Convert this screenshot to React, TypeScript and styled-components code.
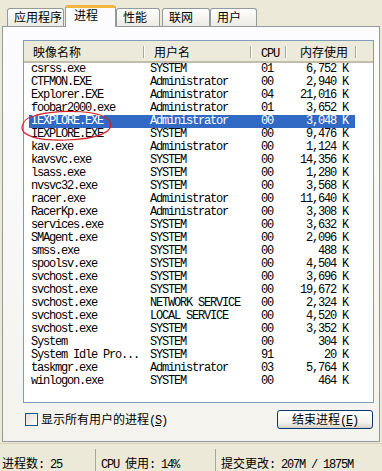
import styled, { createGlobalStyle } from "styled-components";

const cjk = `"Noto Sans CJK SC", sans-serif`;
const mono = `"Liberation Mono", "Noto Sans CJK SC", monospace`;

const GlobalStyle = createGlobalStyle`
  html, body {
    margin: 0;
    padding: 0;
    background: #ece9d8;
    overflow: hidden;
  }
  * { box-sizing: border-box; }
`;

type Proc = { name: string; user: string; cpu: string; mem: string };

const procs: Proc[] = [
  { name: "csrss.exe", user: "SYSTEM", cpu: "01", mem: "6,752 K" },
  { name: "CTFMON.EXE", user: "Administrator", cpu: "00", mem: "2,940 K" },
  { name: "Explorer.EXE", user: "Administrator", cpu: "04", mem: "21,016 K" },
  { name: "foobar2000.exe", user: "Administrator", cpu: "01", mem: "3,652 K" },
  { name: "IEXPLORE.EXE", user: "Administrator", cpu: "00", mem: "3,048 K" },
  { name: "IEXPLORE.EXE", user: "SYSTEM", cpu: "00", mem: "9,476 K" },
  { name: "kav.exe", user: "Administrator", cpu: "00", mem: "1,124 K" },
  { name: "kavsvc.exe", user: "SYSTEM", cpu: "00", mem: "14,356 K" },
  { name: "lsass.exe", user: "SYSTEM", cpu: "00", mem: "1,280 K" },
  { name: "nvsvc32.exe", user: "SYSTEM", cpu: "00", mem: "3,568 K" },
  { name: "racer.exe", user: "Administrator", cpu: "00", mem: "11,640 K" },
  { name: "RacerKp.exe", user: "Administrator", cpu: "00", mem: "3,308 K" },
  { name: "services.exe", user: "SYSTEM", cpu: "00", mem: "3,632 K" },
  { name: "SMAgent.exe", user: "SYSTEM", cpu: "00", mem: "2,096 K" },
  { name: "smss.exe", user: "SYSTEM", cpu: "00", mem: "488 K" },
  { name: "spoolsv.exe", user: "SYSTEM", cpu: "00", mem: "4,504 K" },
  { name: "svchost.exe", user: "SYSTEM", cpu: "00", mem: "3,696 K" },
  { name: "svchost.exe", user: "SYSTEM", cpu: "00", mem: "19,672 K" },
  { name: "svchost.exe", user: "NETWORK SERVICE", cpu: "00", mem: "2,324 K" },
  { name: "svchost.exe", user: "LOCAL SERVICE", cpu: "00", mem: "4,520 K" },
  { name: "svchost.exe", user: "SYSTEM", cpu: "00", mem: "3,352 K" },
  { name: "System", user: "SYSTEM", cpu: "00", mem: "304 K" },
  { name: "System Idle Pro...", user: "SYSTEM", cpu: "91", mem: "20 K" },
  { name: "taskmgr.exe", user: "Administrator", cpu: "03", mem: "5,764 K" },
  { name: "winlogon.exe", user: "SYSTEM", cpu: "00", mem: "464 K" },
];

const tabs = [
  { label: "应用程序", w: 57, ml: 0 },
  { label: "进程", w: 51, ml: 1, active: true },
  { label: "性能", w: 44, ml: 0 },
  { label: "联网", w: 48, ml: 2 },
  { label: "用户", w: 47, ml: 0 },
];

const Window = styled.div`
  width: 382px;
  height: 471px;
  display: flex;
  flex-direction: column;
  background: #ece9d8;
  font-family: ${cjk};
  font-size: 12px;
  color: #000;
`;

const TabStrip = styled.div`
  height: 26px;
  display: flex;
  align-items: flex-end;
  padding-left: 7px;
`;

const Tab = styled.div<{ $w: number; $ml: number; $active?: boolean }>`
  position: relative;
  width: ${(p) => p.$w}px;
  margin-left: ${(p) => p.$ml}px;
  height: ${(p) => (p.$active ? 22 : 18)}px;
  margin-bottom: ${(p) => (p.$active ? -1 : 0)}px;
  z-index: ${(p) => (p.$active ? 2 : 0)};
  padding-left: ${(p) => (p.$active ? 8 : 6)}px;
  border: 1px solid #919b9c;
  border-bottom: none;
  border-top: ${(p) => (p.$active ? "3px solid #f5b53f" : "1px solid #919b9c")};
  border-radius: 3px 3px 0 0;
  background: ${(p) =>
    p.$active ? "#fcfcfe" : "linear-gradient(#ffffff, #f3f2ee 60%, #ebeae3)"};
  line-height: ${(p) => (p.$active ? 14 : 16)}px;
  white-space: nowrap;
`;

const Panel = styled.div`
  margin: 0 2px;
  height: 416px;
  border: 1px solid #919b9c;
  background: linear-gradient(#fcfcfe, #f4f3ee);
  padding: 13px 5px 12px 20px;
  display: flex;
  flex-direction: column;
`;

const ListView = styled.div`
  position: relative;
  width: 351px;
  height: 363px;
  border: 1px solid #7f9db9;
  background: #fff;
`;

const Header = styled.div`
  display: flex;
  height: 22px;
  background: #ebeadb;
  border-bottom: 2px solid;
  border-image: linear-gradient(#d6d2c2, #c1bdaa) 1;
`;

const HeadCell = styled.div<{ $w: number; $pl?: number; $right?: boolean }>`
  position: relative;
  width: ${(p) => p.$w}px;
  padding-left: ${(p) => p.$pl ?? 0}px;
  padding-right: ${(p) => (p.$right ? 8 : 0)}px;
  text-align: ${(p) => (p.$right ? "right" : "left")};
  line-height: 21px;
  white-space: nowrap;
  &::after {
    content: "";
    position: absolute;
    right: 0;
    top: 5px;
    height: 12px;
    width: 1px;
    background: #aca899;
    box-shadow: 1px 0 0 #fff;
  }
`;

const Latin = styled.span`
  font-family: ${mono};
  letter-spacing: -1.2px;
`;

const Rows = styled.div`
  display: flex;
  flex-direction: column;
`;

const Row = styled.div<{ $selected?: boolean }>`
  display: flex;
  width: 326px;
  margin-left: 5px;
  height: 13px;
  line-height: 13px;
  font-family: ${mono};
  letter-spacing: -1.2px;
  background: ${(p) => (p.$selected ? "#316ac5" : "transparent")};
  color: ${(p) => (p.$selected ? "#fff" : "#000")};
  white-space: nowrap;
`;

const Cell = styled.div<{ $w: number; $pl?: number; $right?: boolean }>`
  width: ${(p) => p.$w}px;
  padding-left: ${(p) => p.$pl ?? 0}px;
  padding-right: ${(p) => (p.$right ? 7 : 0)}px;
  text-align: ${(p) => (p.$right ? "right" : "left")};
  overflow: hidden;
`;

const Circle = styled.svg`
  position: absolute;
  left: -1px;
  top: -1px;
  overflow: visible;
  pointer-events: none;
`;

const BottomRow = styled.div`
  margin-top: 7px;
  height: 19px;
  display: flex;
  align-items: center;
  justify-content: space-between;
`;

const CheckLabel = styled.label`
  display: flex;
  align-items: center;
  gap: 3px;
  margin-left: 2px;
  white-space: nowrap;
  line-height: 14px;
`;

const CheckBox = styled.span`
  width: 13px;
  height: 13px;
  border: 1px solid #1c5180;
  background: linear-gradient(135deg, #dcdcd7, #ffffff);
`;

const Button = styled.button`
  width: 96px;
  height: 19px;
  margin-right: 1px;
  border: 1px solid #003c74;
  border-radius: 3px;
  background: linear-gradient(#ffffff, #f3f2ed 70%, #d6d0c5);
  font-family: ${cjk};
  font-size: 12px;
  line-height: 15px;
  color: #000;
  padding: 0;
`;

const StatusBar = styled.div`
  margin-top: 1px;
  height: 28px;
  display: flex;
  border-top: 1px solid #d8d2bd;
`;

const StatusCell = styled.div<{ $w?: number; $sep?: boolean }>`
  ${(p) => (p.$w ? `width: ${p.$w}px;` : "flex: 1;")}
  margin-top: 5px;
  padding: 7px 0 0 ${(p) => (p.$sep ? 5 : 2)}px;
  border-left: ${(p) => (p.$sep ? "1px solid #aca899" : "none")};
  line-height: 13px;
  white-space: nowrap;
`;

export default function App() {
  return (
    <Window>
      <GlobalStyle />
      <TabStrip>
        {tabs.map((t) => (
          <Tab key={t.label} $w={t.w} $ml={t.ml} $active={t.active}>
            {t.label}
          </Tab>
        ))}
      </TabStrip>
      <Panel>
        <ListView>
          <Header>
            <HeadCell $w={120} $pl={9}>映像名称</HeadCell>
            <HeadCell $w={107} $pl={10}>用户名</HeadCell>
            <HeadCell $w={35} $pl={10}>
              <Latin>CPU</Latin>
            </HeadCell>
            <HeadCell $w={70} $right>内存使用</HeadCell>
          </Header>
          <Rows>
            {procs.map((p, i) => (
              <Row key={i} $selected={i === 4}>
                <Cell $w={114} $pl={2}>{p.name}</Cell>
                <Cell $w={107} $pl={7}>{p.user}</Cell>
                <Cell $w={35} $pl={11}>{p.cpu}</Cell>
                <Cell $w={70} $right>{p.mem}</Cell>
              </Row>
            ))}
          </Rows>
          {/* hand-drawn red loop around the two IEXPLORE rows */}
          <Circle width="351" height="363" viewBox="23 40 351 363">
            <path
              d="M 36 115 C 62 109, 104 110, 110 122 C 114 132, 98 139, 66 140 C 36 141, 21 135, 22 127 C 23 121, 28 117, 34 116 C 38 115, 42 114, 46 113"
              fill="none"
              stroke="#d42020"
              strokeWidth="1.2"
            />
          </Circle>
        </ListView>
        <BottomRow>
          <CheckLabel>
            <CheckBox />
            <span>
              显示所有用户的进程
              <Latin>
                (<u>S</u>)
              </Latin>
            </span>
          </CheckLabel>
          <Button>
            结束进程
            <Latin>
              (<u>E</u>)
            </Latin>
          </Button>
        </BottomRow>
      </Panel>
      <StatusBar>
        <StatusCell $w={95}>
          进程数<Latin>: 25</Latin>
        </StatusCell>
        <StatusCell $w={120} $sep>
          <Latin>CPU </Latin>使用<Latin>: 14%</Latin>
        </StatusCell>
        <StatusCell $sep>
          提交更改<Latin>: 207M / 1875M</Latin>
        </StatusCell>
      </StatusBar>
    </Window>
  );
}
